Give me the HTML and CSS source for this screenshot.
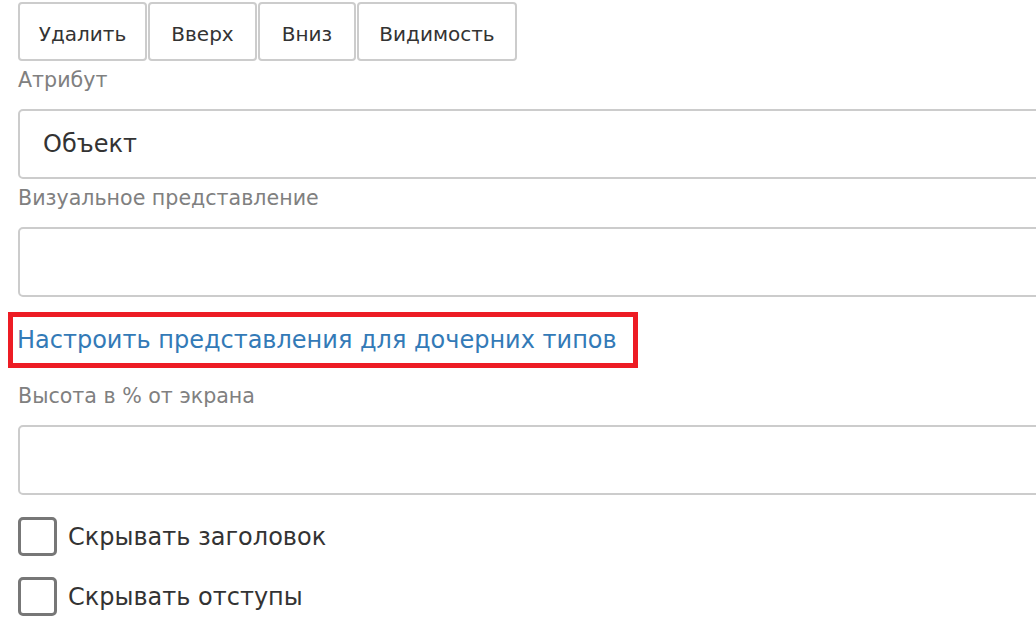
FILE: index.html
```html
<!DOCTYPE html>
<html lang="ru">
<head>
    <meta charset="UTF-8">
    <meta name="viewport" content="width=device-width, initial-scale=1.0">
    <title>Настройки атрибута</title>
    <link rel="stylesheet" href="styles.css">
</head>
<body>
    <div class="toolbar">
        <button class="tool-btn btn-delete">Удалить</button>
        <button class="tool-btn btn-up">Вверх</button>
        <button class="tool-btn btn-down">Вниз</button>
        <button class="tool-btn btn-visible">Видимость</button>
    </div>

    <div class="field">
        <label for="attr">Атрибут</label>
        <input type="text" id="attr" class="text-input" value="Объект">
    </div>

    <div class="field">
        <label for="view">Визуальное представление</label>
        <input type="text" id="view" class="text-input">
    </div>

    <div class="link-row">
        <a href="#" class="child-link">Настроить представления для дочерних типов</a>
    </div>

    <div class="field field-after-link">
        <label for="height">Высота в % от экрана</label>
        <input type="text" id="height" class="text-input">
    </div>

    <label class="check-row">
        <input type="checkbox" class="check">
        <span class="check-box"></span>
        <span>Скрывать заголовок</span>
    </label>
    <label class="check-row">
        <input type="checkbox" class="check">
        <span class="check-box"></span>
        <span>Скрывать отступы</span>
    </label>
</body>
</html>
```

FILE: styles.css
```css
body {
    font-family: "DejaVu Sans", Verdana, sans-serif;
    margin: 0;
    padding: 2px 0 0 18px;
    color: #333;
    background: #fff;
    overflow: hidden;
}
.toolbar {
    display: flex;
    gap: 1px;
}
.tool-btn {
    height: 59px;
    padding: 4px 0 0;
    font-family: inherit;
    font-size: 20px;
    color: #333;
    background: #fff;
    border: 2px solid #ccc;
    border-radius: 4px;
}
.btn-delete { width: 129px; }
.btn-up { width: 109px; }
.btn-down { width: 98px; }
.btn-visible { width: 160px; }

.field label {
    display: block;
    font-size: 20.6px;
    color: #808080;
    line-height: 24px;
    margin: 7px 0 17px;
}
.field-after-link label {
    margin-top: 16px;
}
.text-input {
    display: block;
    box-sizing: border-box;
    width: 1040px;
    height: 70px;
    padding: 0 23px;
    font-family: inherit;
    font-size: 24px;
    color: #333;
    border: 2px solid #ccc;
    border-radius: 5px;
    outline: none;
}
.link-row {
    margin: 15px 0 0 -10px;
}
.child-link {
    display: inline-block;
    padding: 9px 16px 9px 4px;
    line-height: 28px;
    border: 5px solid #ed1c24;
    font-size: 24px;
    color: #337ab7;
    text-decoration: none;
}
.check-row {
    display: flex;
    align-items: center;
    gap: 11px;
    font-size: 24px;
    color: #333;
    margin-top: 22px;
    height: 39px;
}
.check-row + .check-row {
    margin-top: 21px;
}
.check {
    display: none;
}
.check-box {
    box-sizing: border-box;
    width: 39px;
    height: 39px;
    border: 3px solid #777;
    border-radius: 5px;
}
```
